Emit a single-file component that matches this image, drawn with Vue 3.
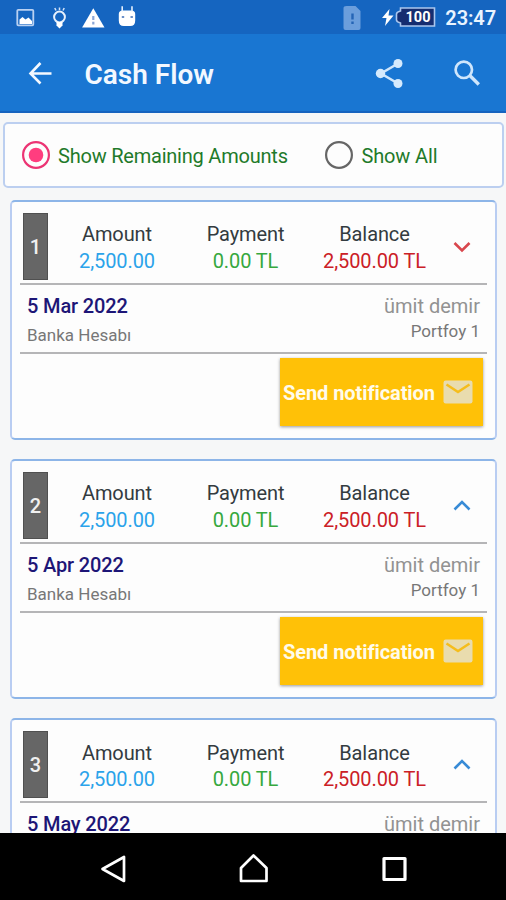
<script setup>
const entries = [
  { no: 1, date: '5 Mar 2022', open: true },
  { no: 2, date: '5 Apr 2022', open: false },
  { no: 3, date: '5 May 2022', open: false },
]
</script>

<template>
  <div class="screen">
    <div class="status">
      <svg class="status-left" width="150" height="34" viewBox="0 0 150 34">
        <rect x="17.300" y="9.800" width="16" height="15.500" rx="1" fill="none" stroke="#b9d1f2" stroke-width="1.800" />
        <path d="M19.500 24v-4.500l3-2.500 3 2.500 3-2 3.500 3.500v3z" fill="#fff" />
        <circle cx="59.500" cy="17" r="5.400" fill="none" stroke="#e6f0fc" stroke-width="2" />
        <path d="M56.500 22h6v3.500l-3 3-3-3z" fill="#fff" />
        <path d="M59.500 7.500v2.500M54.800 8l1.200 2.500M64.200 8l-1.200 2.500" stroke="#d5e5fa" stroke-width="1.500" />
        <path d="M93.300 8.300l11.200 19.300h-22.400z" fill="#fff" />
        <path d="M93.300 16v4M93.300 21.800v2.700" stroke="#8aa6d6" stroke-width="2.200" />
        <path d="M118.800 14q0-3.500 4-3.500h8.400q4 0 4 3.500v6.500q0 5.500-5 5.500h-6.400q-5 0-5-5.500z" fill="#fff" />
        <path d="M122.200 11.500V6.300M132 11.500V6.300" stroke="#e4effc" stroke-width="1.600" />
        <path d="M121.800 17h2.400M130.500 17h2.400" stroke="#3a6cb8" stroke-width="1.600" />
      </svg>
      <div class="status-right">
        <svg width="93" height="34" viewBox="0 0 93 34">
          <path d="M3.500 6h9L17.500 11v17q0 2-2 2h-13q-2 0-2-2V8q0-2 3-2z" fill="#6b9edc" />
          <path d="M9.500 13.500v6M9.500 21.500v2.500" stroke="#2464b5" stroke-width="2.400" />
          <path d="M46.500 9l-7.500 9h4.500L42 26l8.500-10.500h-5z" fill="#fff" />
          <path d="M57.500 8h34v18h-34v-3q-4-1-4-3v-6q0-2 4-3z" fill="#152d70" stroke="#aac6ed" stroke-width="1.600" />
        </svg>
        <span class="battery">100</span>
        <span class="clock">23:47</span>
      </div>
    </div>

    <header class="toolbar">
      <svg class="back" width="26" height="26" viewBox="0 0 26 26">
        <path d="M24.500 13.500H4M13.500 3L3.500 13.500l10 10" fill="none" stroke="#f4f9ff" stroke-width="2.600" />
      </svg>
      <h1>Cash Flow</h1>
      <svg class="share" width="30" height="32" viewBox="0 0 30 32">
        <path d="M24 6.500L7 16.500l17 10" fill="none" stroke="#cfe6fc" stroke-width="2.600" />
        <g fill="#d5eafd"><circle cx="24" cy="6.500" r="4.500" /><circle cx="6.500" cy="16.500" r="4.700" /><circle cx="24" cy="26.500" r="4.500" /></g>
      </svg>
      <svg class="search" width="28" height="28" viewBox="0 0 28 28">
        <circle cx="10.800" cy="10.800" r="8.200" fill="none" stroke="#cfe6fc" stroke-width="2.700" />
        <path d="M16.800 16.500l9 9" stroke="#cfe6fc" stroke-width="3.400" />
      </svg>
    </header>

    <main class="content">
      <div class="filter">
        <label class="option first">
          <svg width="28" height="28" viewBox="0 0 28 28">
            <circle cx="14" cy="14" r="12.900" fill="none" stroke="#ec3474" stroke-width="2.200" />
            <circle cx="14" cy="14" r="7.300" fill="#ff3d7f" />
          </svg>
          <span>Show Remaining Amounts</span>
        </label>
        <label class="option second">
          <svg width="28" height="28" viewBox="0 0 28 28">
            <circle cx="14" cy="14" r="12.900" fill="none" stroke="#666" stroke-width="2.200" />
          </svg>
          <span>Show All</span>
        </label>
      </div>

      <article v-for="e in entries" :key="e.no" class="card">
        <section class="summary">
          <div class="badge">{{ e.no }}</div>
          <dl class="amount"><dt>Amount</dt><dd>2,500.00</dd></dl>
          <dl class="payment"><dt>Payment</dt><dd>0.00 TL</dd></dl>
          <dl class="balance"><dt>Balance</dt><dd>2,500.00 TL</dd></dl>
          <svg class="chevron" width="18" height="12" viewBox="0 0 18 12">
            <path v-if="e.open" d="M1.500 2L9 9.500l7.500-7.500" fill="none" stroke="#d9474d" stroke-width="2.600" />
            <path v-else d="M1.500 9.500L9 2l7.500 7.500" fill="none" stroke="#388bd6" stroke-width="2.600" />
          </svg>
        </section>
        <section class="details">
          <div class="left">
            <div class="date">{{ e.date }}</div>
            <div class="account">Banka Hesabı</div>
          </div>
          <div class="right">
            <div class="person">ümit demir</div>
            <div class="portfolio">Portfoy 1</div>
          </div>
        </section>
        <section class="actions">
          <button class="notify">
            <span>Send notification</span>
            <svg width="30" height="24" viewBox="0 0 30 24">
              <rect x="0.500" y="0.500" width="29" height="23" rx="2.200" fill="#e9dcae" />
              <path d="M3.500 4.500L15 12l11.500-7.500" fill="none" stroke="#f5bd1c" stroke-width="2.500" />
            </svg>
          </button>
        </section>
      </article>
    </main>

    <nav class="navbar">
      <svg width="506" height="66" viewBox="0 0 506 66" fill="none" stroke="#fff" stroke-width="2.700" stroke-linejoin="round">
        <path d="M124 24v24L102.500 36z" />
        <path d="M241 48V35l12.500-12.500 13 12.500v13z" />
        <rect x="384" y="25.500" width="21" height="21" stroke-width="3.200" />
      </svg>
    </nav>
  </div>
</template>

<style>
body {
  margin: 0;
}
</style>

<style scoped>
.screen {
  width: 506px;
  height: 900px;
  display: flex;
  flex-direction: column;
  overflow: hidden;
  background: #f6f7f8;
  font-family: Roboto, "Liberation Sans", sans-serif;
}
.status {
  height: 34px;
  flex: none;
  display: flex;
  justify-content: space-between;
  background: #1565c0;
}
.status-right {
  display: grid;
  grid-template-columns: 93px 61px;
  margin-right: 10px;
  width: 154px;
}
.status-right svg,
.battery {
  grid-area: 1 / 1;
}
.status-right svg {
  margin-left: 1px;
}
.battery {
  justify-self: end;
  width: 32px;
  margin-right: 1px;
  text-align: center;
  font-size: 14.5px;
  font-weight: 700;
  line-height: 36px;
  color: #fff;
}
.clock {
  font-size: 20px;
  font-weight: 600;
  line-height: 36px;
  text-align: right;
  letter-spacing: -0.1px;
  color: #eaf4ff;
}
.toolbar {
  height: 79px;
  box-sizing: border-box;
  flex: none;
  display: flex;
  align-items: center;
  padding: 0 25px 0 27px;
  background: #1976d2;
  border-bottom: 2px solid #1563bf;
}
h1 {
  flex: 1;
  margin: 4px 0 0 31.5px;
  font-size: 28px;
  font-weight: 600;
  line-height: 32px;
  color: #f2f8ff;
}
.search {
  margin-left: 49px;
}
.content {
  flex: 1;
  min-height: 0;
  overflow: hidden;
}
.filter {
  box-sizing: border-box;
  height: 66px;
  margin: 9px 2px 12px 3px;
  display: flex;
  align-items: center;
  padding-left: 16.5px;
  background: #fdfdfd;
  border: 2px solid #bccff0;
  border-radius: 5px;
}
.option {
  display: flex;
  align-items: center;
  gap: 8.5px;
  font-size: 20px;
  line-height: 26px;
  color: #1f7a2a;
  white-space: nowrap;
}
.option span {
  padding-top: 2px;
}
.option.first {
  width: 303.5px;
  letter-spacing: -0.22px;
}
.option.second {
  letter-spacing: -0.15px;
}
.card {
  box-sizing: border-box;
  height: 240px;
  margin: 0 9px 19.2px 10px;
  padding: 0 8px;
  background: #fdfdfd;
  border: 2px solid #b9cdf2;
  border-top-color: #8db5e8;
  border-bottom-color: #8db5e8;
  border-radius: 5px;
}
.summary {
  box-sizing: border-box;
  height: 83px;
  display: grid;
  grid-template-columns: 28px 132px 125px 133px 1fr;
  padding: 11px 0 0 3px;
  border-bottom: 2px solid #b5b5b7;
}
.badge {
  box-sizing: border-box;
  width: 25px;
  height: 67px;
  background: #666;
  border: 1px solid #505050;
  color: #f0f0f0;
  text-align: center;
  font-size: 20px;
  font-weight: 500;
  line-height: 67px;
}
dl {
  margin: 8.2px 0 0;
  text-align: center;
  font-size: 20px;
  line-height: 26.5px;
  letter-spacing: -0.1px;
  white-space: nowrap;
}
dt {
  color: #333b40;
}
dd {
  margin: 0;
}
.amount dd {
  color: #2ba3ea;
}
.payment dd {
  color: #36a83e;
}
.balance dd {
  color: #cb2026;
}
.chevron {
  margin: 28px 0 0 12px;
}
.details {
  box-sizing: border-box;
  height: 69px;
  display: flex;
  justify-content: space-between;
  padding: 8px 7px 0 7px;
  border-bottom: 2px solid #b5b5b7;
}
.date {
  font-size: 20px;
  font-weight: 500;
  letter-spacing: -0.15px;
  line-height: 26px;
  color: #1d1677;
}
.account {
  margin-top: 5px;
  font-size: 17px;
  line-height: 22px;
  color: #777;
}
.right {
  text-align: right;
}
.person {
  font-size: 20px;
  line-height: 26px;
  color: #929292;
}
.portfolio {
  margin-top: 0.5px;
  font-size: 17px;
  line-height: 22px;
  color: #777;
}
.actions {
  display: flex;
  justify-content: flex-end;
  padding: 4px 4px 0 0;
}
.notify {
  width: 203px;
  height: 68px;
  display: flex;
  align-items: center;
  gap: 8px;
  padding: 0 0 0 3px;
  border: 0;
  background: #ffc107;
  box-shadow: 0 1px 3px rgba(0, 0, 0, 0.4);
  color: #fffbea;
  font-family: inherit;
  font-size: 20px;
  font-weight: 700;
  letter-spacing: -0.08px;
  white-space: nowrap;
}
.notify span {
  padding-top: 1px;
}
.navbar {
  height: 67px;
  flex: none;
  background: #000;
}
</style>
